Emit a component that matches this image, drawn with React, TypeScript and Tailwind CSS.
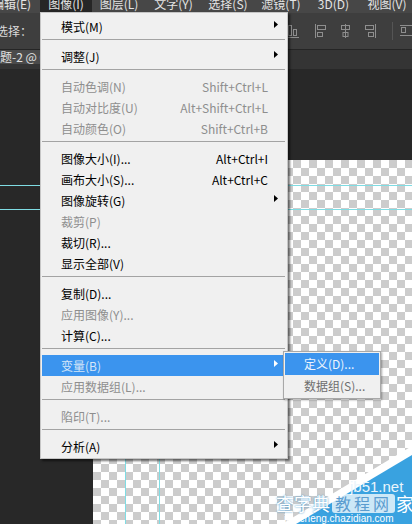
import clsx from 'clsx'

type Item =
  | 'sep'
  | { label: string; sc?: string; arrow?: boolean; dis?: boolean; active?: boolean }

const items: Item[] = [
  { label: '模式(M)', arrow: true },
  'sep',
  { label: '调整(J)', arrow: true },
  'sep',
  { label: '自动色调(N)', sc: 'Shift+Ctrl+L', dis: true },
  { label: '自动对比度(U)', sc: 'Alt+Shift+Ctrl+L', dis: true },
  { label: '自动颜色(O)', sc: 'Shift+Ctrl+B', dis: true },
  'sep',
  { label: '图像大小(I)...', sc: 'Alt+Ctrl+I' },
  { label: '画布大小(S)...', sc: 'Alt+Ctrl+C' },
  { label: '图像旋转(G)', arrow: true },
  { label: '裁剪(P)', dis: true },
  { label: '裁切(R)...' },
  { label: '显示全部(V)' },
  'sep',
  { label: '复制(D)...' },
  { label: '应用图像(Y)...', dis: true },
  { label: '计算(C)...' },
  'sep',
  { label: '变量(B)', arrow: true, active: true },
  { label: '应用数据组(L)...', dis: true },
  'sep',
  { label: '陷印(T)...', dis: true },
  'sep',
  { label: '分析(A)', arrow: true },
]

const topMenus = [
  { label: '编辑(E)', w: 'w-[57px]' },
  { label: '图像(I)', w: 'w-[52px]', on: true },
  { label: '图层(L)', w: 'w-[54px]' },
  { label: '文字(Y)', w: 'w-[55px]' },
  { label: '选择(S)', w: 'w-[54px]' },
  { label: '滤镜(T)', w: 'w-[52px]' },
  { label: '3D(D)', w: 'w-[53px]' },
  { label: '视图(V)', w: 'w-[54px]' },
]

function Arrow({ white }: { white?: boolean }) {
  return (
    <svg width="4" height="7" viewBox="0 0 4 7">
      <polygon points="0,0 4,3.5 0,7" fill={white ? '#ffffff' : '#000000'} />
    </svg>
  )
}

function AlignIcons() {
  const c = '#8e8e8e'
  return (
    <div className="ml-auto flex items-center h-full">
      {/* align bottom, mostly under the menu */}
      <svg width="14" height="16" viewBox="0 0 14 16" className="ml-[-4px]">
        <rect x="3.5" y="2.5" width="3" height="10" fill="none" stroke={c} />
        <rect x="8.5" y="6.5" width="3" height="6" fill="none" stroke={c} />
        <line x1="1" y1="14.5" x2="14" y2="14.5" stroke={c} />
      </svg>
      <svg width="11" height="16" viewBox="0 0 11 16" className="ml-[16px]">
        <line x1="0.5" y1="1" x2="0.5" y2="15" stroke={c} />
        <rect x="2.5" y="2.5" width="8" height="4" fill="none" stroke={c} />
        <rect x="2.5" y="9.5" width="5" height="4" fill="none" stroke={c} />
      </svg>
      <svg width="11" height="16" viewBox="0 0 11 16" className="ml-[14px]">
        <line x1="5.5" y1="1" x2="5.5" y2="15" stroke={c} />
        <rect x="1.5" y="2.5" width="8" height="4" fill="none" stroke={c} />
        <rect x="3" y="9.5" width="5" height="4" fill="none" stroke={c} />
      </svg>
      <svg width="11" height="16" viewBox="0 0 11 16" className="ml-[14px]">
        <line x1="10.5" y1="1" x2="10.5" y2="15" stroke={c} />
        <rect x="0.5" y="2.5" width="8" height="4" fill="none" stroke={c} />
        <rect x="3.5" y="9.5" width="5" height="4" fill="none" stroke={c} />
      </svg>
      <div className="ml-[16px] w-px h-[18px] bg-[#2a2a2a] border-r border-[#555]" />
      <svg width="12" height="16" viewBox="0 0 12 16" className="ml-[7px]">
        <line x1="0" y1="2.5" x2="12" y2="2.5" stroke={c} />
        <rect x="1.5" y="4.5" width="4" height="5" fill="none" stroke={c} />
        <line x1="0" y1="12.5" x2="12" y2="12.5" stroke={c} />
      </svg>
    </div>
  )
}

function ImageMenu() {
  return (
    <div className="absolute left-[40px] top-[12px] w-[248px] bg-[#f0f0f0] border border-[#c6c6c6] pt-[3px] pb-[1px] shadow-[2px_2px_2px_rgba(0,0,0,0.55)] z-20">
      {items.map((it, i) =>
        it === 'sep' ? (
          <div key={i} className="pt-[2px] pb-[6px] pl-[1px] pr-[2px]">
            <div className="h-px bg-[#a3a3a3]" />
          </div>
        ) : (
          <div
            key={i}
            className={clsx(
              'relative flex h-[21px] items-center pr-[19px] text-[12px] leading-[21px] whitespace-nowrap',
              it.active ? 'mx-[1px] pl-[19px] bg-[#3b94ee] text-[#d5e6f8]' : 'pl-[20px]',
              !it.active && (it.dis ? 'text-[#8e8e8e]' : 'text-black'),
            )}
          >
            <span>{it.label}</span>
            {it.sc && <span className="ml-auto">{it.sc}</span>}
            {it.arrow && (
              <span className={clsx('absolute top-[5px] flex', it.active ? 'left-[232px]' : 'left-[233px]')}>
                <Arrow white={it.active} />
              </span>
            )}
          </div>
        ),
      )}
    </div>
  )
}

function SubMenu() {
  return (
    <div className="absolute left-[283px] top-[351px] w-[98px] bg-[#f0f0f0] border border-[#a8a8a8] p-[1px] shadow-[1px_1px_2px_rgba(0,0,0,0.35)] z-30 text-[12px] whitespace-nowrap">
      <div className="h-[22px] leading-[22px] pl-[19px] bg-[#3b94ee] text-[#eef5fd]">定义(D)...</div>
      <div className="h-[22px] leading-[22px] pl-[19px] text-[#6e6e6e]">数据组(S)...</div>
    </div>
  )
}

function Watermark() {
  return (
    <div className="absolute right-0 bottom-0 w-[144px] h-[80px] z-10 overflow-hidden">
      <svg width="144" height="80" viewBox="0 0 144 80" className="absolute left-0 top-0">
        <polygon points="144,2 144,80 14,80" fill="#ffffff" />
        <polygon points="144,11 144,80 28,80" fill="#39a2e0" />
      </svg>
      <div className="relative flex flex-col pt-[35px] whitespace-nowrap">
        <div className="pl-[82px] text-[15px] leading-[16px] text-[#e9f5fc] font-['Liberation_Sans',sans-serif]">jb51.net</div>
        <div className="flex items-center h-[20px] mt-[-2px] pl-[8px]">
          <span className="text-[18px] leading-[20px] text-white [text-shadow:0_0_2px_#2c86c4]">查字典</span>
          <span className="ml-[2px] h-[19px] px-[3px] rounded-[3px] bg-[rgba(255,255,255,0.75)] text-[16px] leading-[19px] tracking-[3px] text-[#5b9ccf]">教程网</span>
          <span className="ml-[1px] text-[18px] leading-[20px] text-white">家</span>
        </div>
        <div className="pl-[16px] text-[10px] leading-[11px] text-white font-['Liberation_Sans',sans-serif]">jiaocheng.chazidian.com</div>
      </div>
    </div>
  )
}

export default function App() {
  return (
    <div className="relative w-[412px] h-[524px] overflow-hidden bg-[#282828] flex flex-col font-['Noto_Sans_CJK_SC',sans-serif]">
      {/* menu bar */}
      <div className="h-[13px] shrink-0 bg-[#474747] flex overflow-hidden">
        <div className="flex ml-[-17px]">
          {topMenus.map((m) => (
            <div
              key={m.label}
              className={clsx(
                m.w,
                'h-[13px] text-center text-[12px] leading-[12px] text-[#e4e4e4] whitespace-nowrap',
                m.on && 'bg-[#262626]',
              )}
            >
              <div className="mt-[-2px]">{m.label}</div>
            </div>
          ))}
        </div>
      </div>

      {/* options bar */}
      <div className="h-[37px] shrink-0 bg-[#3e3e3e] border-b border-[#252525] flex items-center">
        <span className="ml-[-28px] text-[12px] text-[#dadada] whitespace-nowrap">自动选择：</span>
        <AlignIcons />
      </div>

      {/* tab bar */}
      <div className="h-[19px] shrink-0 bg-[#343434] flex items-start">
        <div className="h-[14px] w-[60px] bg-[#4b4b4b] overflow-hidden">
          <div className="ml-[-24px] text-[12px] leading-[14px] text-[#e2e2e2] whitespace-nowrap">未标题-2 @ 66.7%</div>
        </div>
      </div>

      {/* workspace */}
      <div className="flex-1 pl-[93px] pt-[91px]">
        <div className="w-full h-full [background:repeating-conic-gradient(#cccccc_0_25%,#ffffff_0_50%)_0_0/16px_16px]" />
      </div>

      {/* guides */}
      <div className="absolute left-0 right-0 top-[185px] h-px bg-[#7fdce3]" />
      <div className="absolute left-0 right-0 top-[209px] h-px bg-[#7fdce3]" />
      <div className="absolute left-[125px] top-[70px] bottom-0 w-px bg-[#7fdce3]" />
      <div className="absolute left-[159px] top-[70px] bottom-0 w-px bg-[#7fdce3]" />

      <ImageMenu />
      <SubMenu />
      <Watermark />
    </div>
  )
}
